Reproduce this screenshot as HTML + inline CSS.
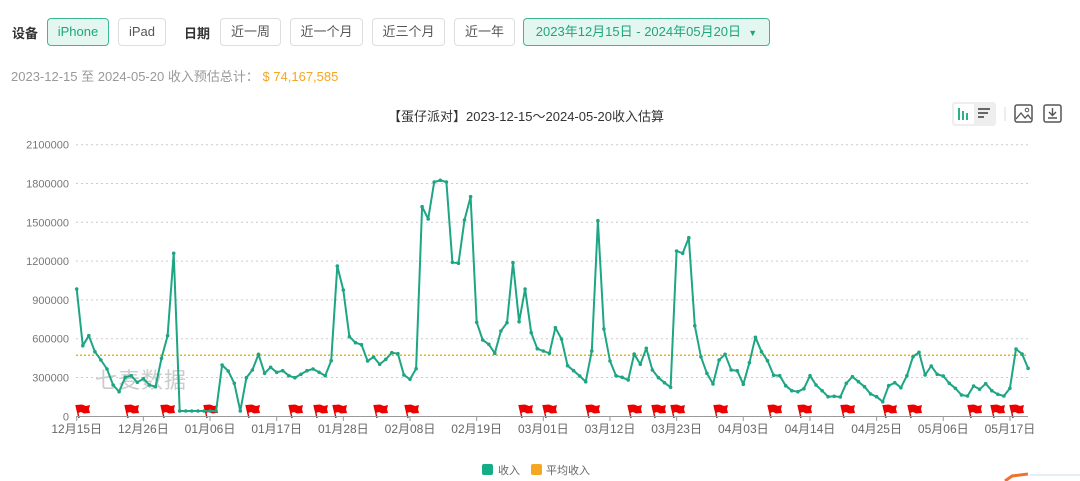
<!DOCTYPE html>
<html><head><meta charset="utf-8"><style>
body{margin:0;width:1080px;height:481px;background:#fff;font-family:"Liberation Sans","Noto Sans CJK SC",sans-serif;position:relative;overflow:hidden;color:#333}
.a{position:absolute;white-space:nowrap}
.btn{position:absolute;top:18px;height:26px;border:1px solid #ddd;border-radius:4px;font-size:13px;color:#555;line-height:26px;text-align:center;box-sizing:content-box}
.on{background:#e3f6f0;border-color:#3db893;color:#1ea57c}
.lbl{position:absolute;top:23px;font-size:13px;font-weight:bold;color:#333}
</style></head><body>
<div class="lbl" style="left:12px">设备</div>
<div class="btn on" style="left:47px;width:60px">iPhone</div>
<div class="btn" style="left:118px;width:46px">iPad</div>
<div class="lbl" style="left:184px">日期</div>
<div class="btn" style="left:220px;width:59px">近一周</div>
<div class="btn" style="left:290px;width:71px">近一个月</div>
<div class="btn" style="left:372px;width:71px">近三个月</div>
<div class="btn" style="left:454px;width:59px">近一年</div>
<div class="btn on" style="left:523px;width:245px">2023年12月15日 - 2024年05月20日 &nbsp;<span style="font-size:9px">▼</span></div>
<div class="a" style="left:11px;top:66px;font-size:13px;color:#999">2023-12-15 至 2024-05-20 收入预估总计： <span style="color:#f5a623">$ 74,167,585</span></div>
<div class="a" style="left:388px;top:106px;font-size:13px;color:#333">【蛋仔派对】2023-12-15～2024-05-20收入估算</div>
<svg class="a" style="left:0;top:0" width="1080" height="481" id="s">
<rect x="952" y="102" width="44" height="24" rx="3" fill="#eee"/>
<rect x="954" y="104" width="20" height="20" rx="2" fill="#fff"/>
<g fill="#2bb08a"><rect x="958" y="108" width="2" height="12"/><rect x="962" y="111" width="2" height="9"/><rect x="966" y="113" width="2" height="7"/></g>
<g fill="#666"><rect x="978" y="108" width="12" height="2"/><rect x="978" y="112" width="10" height="2"/><rect x="978" y="116" width="6" height="2"/></g>
<line x1="1005" y1="107" x2="1005" y2="121" stroke="#ddd"/>
<rect x="1015" y="105" width="17" height="17" rx="2" fill="none" stroke="#555" stroke-width="1.5"/>
<circle cx="1027" cy="110" r="1.8" fill="none" stroke="#555"/>
<path d="M1016 119 L1021 113 L1025 118 L1028 115 L1031 119" fill="none" stroke="#555" stroke-width="1.3"/>
<rect x="1044" y="105" width="17" height="17" rx="2" fill="none" stroke="#555" stroke-width="1.5"/>
<path d="M1052.5 108 V115 M1049 112 L1052.5 115.5 L1056 112 M1048 118 H1057" fill="none" stroke="#555" stroke-width="1.4"/>
<text x="95" y="388" font-size="22" fill="#ccc" font-family="Liberation Sans,Noto Sans CJK SC,sans-serif" letter-spacing="1">七麦数据</text>
</svg>
<script>
var s=document.getElementById('s'),h='';
var labs=['2100000','1800000','1500000','1200000','900000','600000','300000','0'];
for(var k=0;k<8;k++){var y=144.7+k*38.8;if(k<7)h+='<line x1="76" x2="1028" y1="'+y+'" y2="'+y+'" stroke="#ccc" stroke-dasharray="2,3"/>';h+='<text x="69" y="'+(y+4)+'" font-size="11" fill="#777" text-anchor="end">'+labs[k]+'</text>';}
h+='<line x1="76" x2="1028" y1="355.3" y2="355.3" stroke="#e6b422" stroke-width="1.5" stroke-dasharray="2,2"/>';
var zy=[447,617,587,635,660,687,735,755,712,707,727,716,735,740,655,587,340,813,813,813,813,813,813,813,675,693,730,813,713,690,643,700,682,697,692,707,713,703,692,687,697,
707,662,378,450,590,608,614,663,651,673,658,638,641,705,718,686,200,237,126,121,126,367,370,240,170,547,600,613,640,573,548,368,545,447,578,626,633,
640,563,597,677,692,708,725,633,242,567,663,707,712,720,642,673,625,690,713,728,742,333,340,293,557,650,700,732,660,643,690,692,733,668,592,635,662,706,707,737,752,755,
746,707,735,752,770,769,771,730,710,725,740,762,770,785,737,728,743,707,650,637,705,678,703,708,730,745,765,768,738,748,731,752,763,768,745,627,642,685];
var fl=[78,127,163,206,248,291,316,335,376,407,521,545,588,630,654,673,716,770,800,843,885,910,970,993,1012];
fl.forEach(function(x){h+='<line x1="'+(x-2)+'" y1="405" x2="'+(x+1)+'" y2="418" stroke="#d00" stroke-width="1.4"/><path d="M'+(x-2)+' 405 L'+(x+4)+' 404.5 L'+(x+8)+' 406 L'+(x+12)+' 405 L'+(x+11)+' 409 L'+(x+12)+' 413 L'+(x+6)+' 413.5 L'+(x+3)+' 412 L'+x+' 413 Z" fill="#e00"/>';});
var pts=[];for(var i=0;i<zy.length;i++){pts.push((76.7+i*6.06).toFixed(1)+','+(zy[i]/3+140).toFixed(1));}
h+='<polyline points="'+pts.join(' ')+'" fill="none" stroke="#1ea584" stroke-width="2" stroke-linejoin="round"/>';
pts.forEach(function(p){var q=p.split(',');h+='<circle cx="'+q[0]+'" cy="'+q[1]+'" r="1.8" fill="#1ea584"/>';});
h+='<line x1="76" x2="1028" y1="416.5" y2="416.5" stroke="#999"/>';
var xl=['12月15日','12月26日','01月06日','01月17日','01月28日','02月08日','02月19日','03月01日','03月12日','03月23日','04月03日','04月14日','04月25日','05月06日','05月17日'];
for(var k=0;k<15;k++){var x=76.7+k*66.66;h+='<line x1="'+x+'" x2="'+x+'" y1="416" y2="421" stroke="#999"/><text x="'+x+'" y="433" font-size="12" fill="#666" text-anchor="middle">'+xl[k]+'</text>';}
h+='<rect x="482" y="464" width="11" height="11" rx="2" fill="#13ae86"/><text x="498" y="474" font-size="11" fill="#666">收入</text>';
h+='<rect x="531" y="464" width="11" height="11" rx="2" fill="#f5a623"/><text x="546" y="474" font-size="11" fill="#666">平均收入</text>';
h+='<path d="M1005 481 L1012 476 L1028 474" stroke="#f07030" stroke-width="3" fill="none"/><line x1="1030" y1="475" x2="1080" y2="475" stroke="#cde"/>';
s.insertAdjacentHTML('beforeend',h);
</script>
</body></html>
